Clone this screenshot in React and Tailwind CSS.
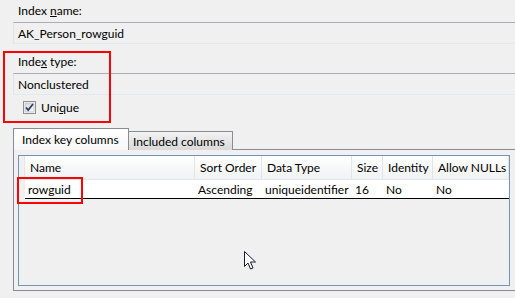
import React from 'react';

const cols = [
  { key: 'name', label: 'Name', w: 'w-[170px]' },
  { key: 'sort', label: 'Sort Order', w: 'w-[67px]' },
  { key: 'type', label: 'Data Type', w: 'w-[90px]' },
  { key: 'size', label: 'Size', w: 'w-[31px]' },
  { key: 'ident', label: 'Identity', w: 'w-[50px]' },
  { key: 'nulls', label: 'Allow NULLs', w: 'w-[76px]' },
];

const row = { name: 'rowguid', sort: 'Ascending', type: 'uniqueidentifier', size: '16', ident: 'No', nulls: 'No' };

function ReadOnlyBox({ children }) {
  return (
    <div className="ml-[13px] h-[22px] border-t border-t-[#abadb3] border-b border-b-[#e3e9ef] border-l border-l-[#e2e3ea] flex items-center pl-[4px]">
      {children}
    </div>
  );
}

function CheckBox() {
  return (
    <svg width="13" height="13" viewBox="0 0 13 13">
      <defs>
        <linearGradient id="cbg" x1="0" y1="0" x2="1" y2="1">
          <stop offset="0" stopColor="#d8d8d8" />
          <stop offset="1" stopColor="#fbfbfb" />
        </linearGradient>
      </defs>
      <rect x="0.5" y="0.5" width="12" height="12" fill="#fff" stroke="#8e8f8f" />
      <rect x="2" y="2" width="9" height="9" fill="url(#cbg)" stroke="#aeb0b4" strokeWidth="0.6" />
      <path d="M3 6.5 L5.2 9 L10 3" fill="none" stroke="#333c6e" strokeWidth="1.8" />
    </svg>
  );
}

export default function App() {
  return (
    <div
      className="relative w-[515px] h-[298px] overflow-hidden bg-[#f0f0f0] text-[12px] leading-[15px] text-black"
      style={{ fontFamily: 'Lato, "Noto Sans", sans-serif' }}
    >
      <div className="pt-[3px] pl-[18px]">
        Index <span className="underline">n</span>ame:
      </div>
      <div className="mt-[4px]">
        <ReadOnlyBox>AK_Person_rowguid</ReadOnlyBox>
      </div>

      <div className="mt-[10px] pl-[18px]">
        Inde<span className="underline">x</span> type:
      </div>
      <div className="mt-[4px]">
        <ReadOnlyBox>Nonclustered</ReadOnlyBox>
      </div>
      <div className="mt-[5px] ml-[23px] flex items-center gap-[5px]">
        <CheckBox />
        <span>
          Uni<span className="underline">q</span>ue
        </span>
      </div>

      {/* tabs */}
      <div className="mt-[13px] ml-[13px] flex items-end h-[22px] whitespace-nowrap">
        <div className="h-[22px] w-[116px] border border-b-0 border-[#898c95] bg-gradient-to-b from-[#ffffff] to-[#f7f7f7] flex items-center pl-[8px] relative z-10">
          Index key columns
        </div>
        <div className="h-[19px] w-[104px] border border-l-0 border-b-0 border-[#898c95] bg-gradient-to-b from-[#f2f2f2] to-[#d9d9d9] flex items-center pl-[4px]">
          Included columns
        </div>
      </div>

      {/* tab panel */}
      <div className="ml-[13px] -mt-px w-[520px] h-[142px] border border-[#898c95] bg-[#f0f0f0] pt-[5px] pl-[4px]">
        <div className="w-[492px] h-[131px] border border-[#7493b8] bg-[#f0f0f0]">
          {/* header */}
          <div className="flex h-[24px] border-b border-[#e5e5e5]">
            <div className="w-[6px] bg-[#f0f0f0] border-r border-[#e3e4e6]" />
            {cols.map((c) => (
              <div
                key={c.key}
                className={`${c.w} shrink-0 flex items-center pl-[5px] bg-gradient-to-b from-[#ffffff] to-[#f1f2f3] border-r border-[#e3e4e6] whitespace-nowrap`}
              >
                {c.label}
              </div>
            ))}
          </div>
          {/* data row */}
          <div className="flex h-[19px]">
            <div className="w-[6px] bg-[#f0f0f0]" />
            <div className="flex bg-white border-b border-black">
              {cols.map((c) => (
                <div key={c.key} className={`${c.w} shrink-0 flex items-center pl-[3px] whitespace-nowrap`}>
                  {row[c.key]}
                </div>
              ))}
            </div>
          </div>
        </div>
      </div>

      {/* annotation boxes */}
      <div className="absolute left-[3px] top-[51px] w-[108px] h-[72px] border-2 border-[#ff0000]" />
      <div className="absolute left-[17px] top-[177px] w-[66px] h-[27px] border-2 border-[#ff0000]" />

      {/* mouse cursor */}
      <svg className="absolute left-[244px] top-[251px]" width="13" height="20" viewBox="0 0 13 20">
        <path
          d="M0.5 0.5 L0.5 15.5 L4 12 L6.5 18 L9 17 L6.5 11 L11.5 11 Z"
          fill="#ffffff"
          stroke="#1a1a2e"
          strokeWidth="1"
          strokeLinejoin="miter"
        />
      </svg>
    </div>
  );
}
